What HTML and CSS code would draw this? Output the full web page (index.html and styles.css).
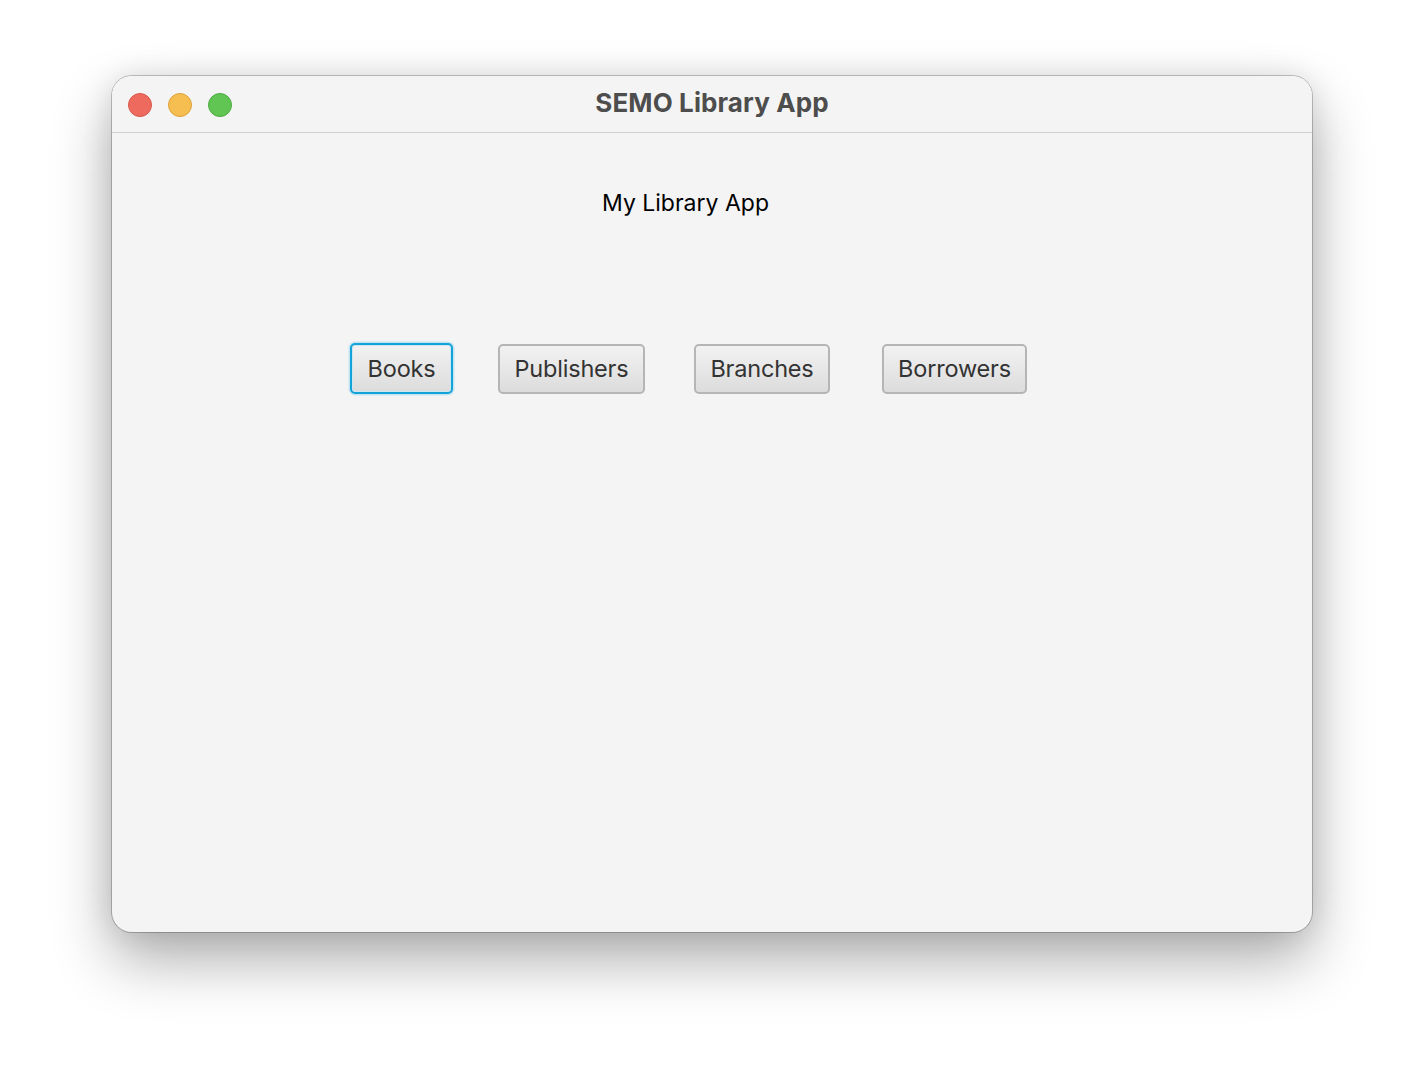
FILE: index.html
```html
<!DOCTYPE html>
<html>
<head>
<meta charset="utf-8">
<link rel="stylesheet" href="styles.css">
</head>
<body>
<div class="window">
  <div class="titlebar">
    <div class="lights">
      <span class="light red"></span>
      <span class="light yellow"></span>
      <span class="light green"></span>
    </div>
    <div class="title">SEMO Library App</div>
  </div>
  <div class="content">
    <div class="heading">My Library App</div>
    <div class="buttons">
      <button class="btn focused btn-books">Books</button>
      <button class="btn btn-publishers">Publishers</button>
      <button class="btn btn-branches">Branches</button>
      <button class="btn btn-borrowers">Borrowers</button>
    </div>
  </div>
</div>
</body>
</html>
```
FILE: styles.css
```css
html, body {
  margin: 0;
  padding: 0;
  background: #ffffff;
  width: 1424px;
  height: 1080px;
  overflow: hidden;
}
body {
  padding-top: 76px;
  padding-left: 112px;
  box-sizing: border-box;
}
.window {
  width: 1200px;
  height: 856px;
  border-radius: 20px;
  background: #f4f4f4;
  box-shadow: 0 0 0 1px rgba(0,0,0,0.22), 0 28px 60px rgba(0,0,0,0.32), 0 0 30px rgba(0,0,0,0.10);
  overflow: hidden;
  font-family: Inter, "Liberation Sans", sans-serif;
}
.titlebar {
  height: 56px;
  border-bottom: 1px solid #d0d0d0;
  background: #f4f4f4;
  display: flex;
  align-items: center;
  position: relative;
  box-sizing: content-box;
}
.lights {
  display: flex;
  gap: 16px;
  padding-left: 16px;
  padding-top: 1px;
}
.light {
  width: 24px;
  height: 24px;
  border-radius: 50%;
  box-sizing: border-box;
}
.red { background: #ee6a5f; border: 1px solid #d8564b; }
.yellow { background: #f6be50; border: 1px solid #dca23a; }
.green { background: #61c554; border: 1px solid #4ea941; }
.title {
  position: absolute;
  left: 0;
  right: 0;
  top: 0;
  line-height: 54px;
  text-align: center;
  font-weight: 700;
  font-size: 26px;
  letter-spacing: 0.1px;
  color: #4d4d4d;
}
.content {
  display: flex;
  flex-direction: column;
}
.heading {
  margin-top: 55px;
  margin-left: 490px;
  font-size: 23px;
  line-height: 30px;
  color: #000;
}
.buttons {
  display: flex;
  margin-top: 125px;
  margin-left: 238px;
  align-items: center;
}
.btn {
  font-family: Inter, "Liberation Sans", sans-serif;
  font-size: 23.5px;
  letter-spacing: -0.2px;
  color: #333;
  height: 50px;
  border: 2px solid #b5b5b5;
  border-radius: 5px;
  background: linear-gradient(#f2f2f2, #dcdcdc);
  padding: 0;
  box-sizing: border-box;
  display: flex;
  align-items: center;
  justify-content: center;
  flex-shrink: 0;
}
.btn.focused {
  border-color: #12a3d9;
  box-shadow: 0 0 0 1.5px #c4e4f2, inset 0 0 0 1px #cde6f2;
  height: 51px;
}
.btn-books { width: 103px; }
.btn-publishers { width: 147px; margin-left: 45px; }
.btn-branches { width: 136px; margin-left: 49px; }
.btn-borrowers { width: 145px; margin-left: 52px; }
```
